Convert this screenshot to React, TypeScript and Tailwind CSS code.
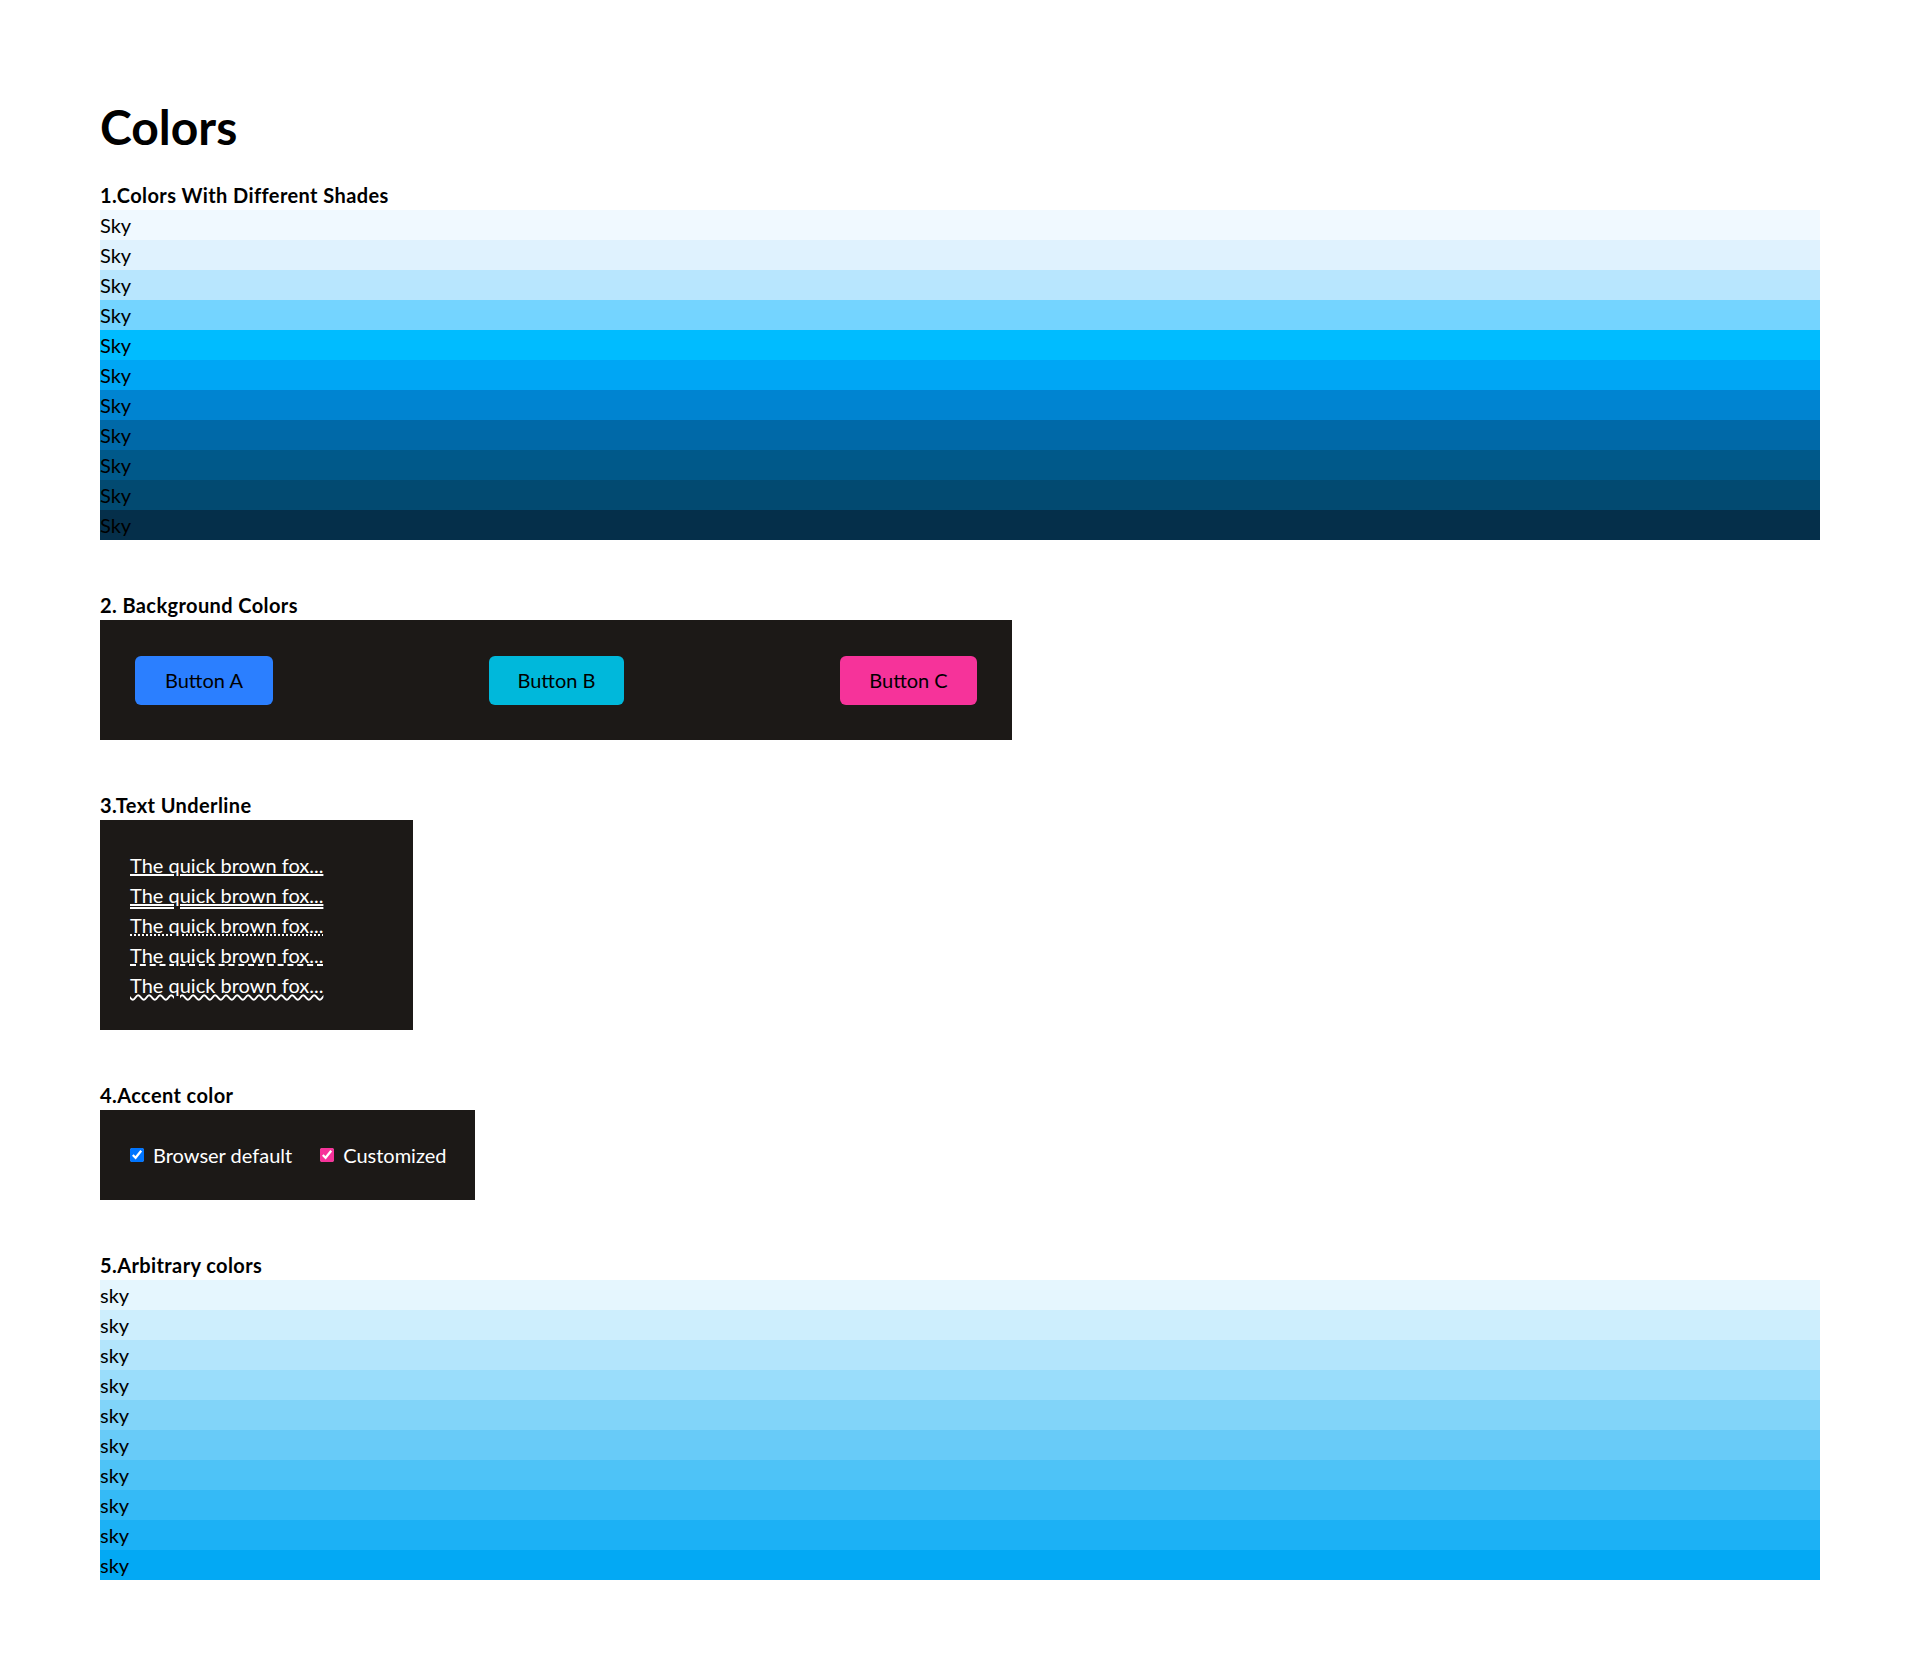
import React from 'react';

const skyShades = [
  'bg-sky-50',
  'bg-sky-100',
  'bg-sky-200',
  'bg-sky-300',
  'bg-sky-400',
  'bg-sky-500',
  'bg-sky-600',
  'bg-sky-700',
  'bg-sky-800',
  'bg-sky-900',
  'bg-sky-950',
];

const arbitraryShades = [
  'bg-[#03a9f4]/10',
  'bg-[#03a9f4]/20',
  'bg-[#03a9f4]/30',
  'bg-[#03a9f4]/40',
  'bg-[#03a9f4]/50',
  'bg-[#03a9f4]/60',
  'bg-[#03a9f4]/70',
  'bg-[#03a9f4]/80',
  'bg-[#03a9f4]/90',
  'bg-[#03a9f4]',
];

const underlines = [
  'underline decoration-solid',
  'underline decoration-double',
  'underline decoration-dotted',
  'underline decoration-dashed',
  'underline decoration-wavy',
];

const SectionTitle: React.FC<{ children: React.ReactNode }> = ({ children }) => (
  <h2 className="font-bold leading-[30px] tracking-[0.4px]">{children}</h2>
);

const App: React.FC = () => {
  return (
    <div className="min-h-screen bg-white px-[100px] py-[100px] text-[20px] leading-[30px] text-black font-['Lato',sans-serif]">
      <h1 className="mb-[29px] pt-[3px] text-5xl leading-none font-bold">Colors</h1>

      {/* 1. shades */}
      <section>
        <SectionTitle>1.Colors With Different Shades</SectionTitle>
        <div className="flex flex-col">
          {skyShades.map((shade, i) => (
            <div key={i} className={`h-[30px] ${shade}`}>
              Sky
            </div>
          ))}
        </div>
      </section>

      {/* 2. background colors */}
      <section className="mt-[50px]">
        <SectionTitle>2. Background Colors</SectionTitle>
        <div className="flex h-[120px] w-[912px] items-center justify-between bg-stone-900 px-[35px]">
          <button className="h-[49px] w-[138px] rounded-md bg-blue-500 text-black">Button A</button>
          <button className="h-[49px] w-[135px] rounded-md bg-cyan-500 text-black">Button B</button>
          <button className="h-[49px] w-[137px] rounded-md bg-pink-500 text-black">Button C</button>
        </div>
      </section>

      {/* 3. underline */}
      <section className="mt-[50px]">
        <SectionTitle>3.Text Underline</SectionTitle>
        <div className="flex w-[313px] flex-col bg-stone-900 p-[30px] text-white">
          {underlines.map((style, i) => (
            <p key={i} className={style}>
              The quick brown fox...
            </p>
          ))}
        </div>
      </section>

      {/* 4. accent */}
      <section className="mt-[50px]">
        <SectionTitle>4.Accent color</SectionTitle>
        <div className="flex h-[90px] w-[375px] items-center gap-[28px] bg-stone-900 px-[30px] text-white">
          <label className="flex shrink-0 items-center gap-[9px] whitespace-nowrap">
            <input type="checkbox" defaultChecked className="h-[14px] w-[14px]" />
            Browser default
          </label>
          <label className="flex shrink-0 items-center gap-[9px] whitespace-nowrap">
            <input type="checkbox" defaultChecked className="h-[14px] w-[14px] accent-pink-500" />
            Customized
          </label>
        </div>
      </section>

      {/* 5. arbitrary */}
      <section className="mt-[50px]">
        <SectionTitle>5.Arbitrary colors</SectionTitle>
        <div className="flex flex-col">
          {arbitraryShades.map((shade, i) => (
            <div key={i} className={`h-[30px] ${shade}`}>
              sky
            </div>
          ))}
        </div>
      </section>
    </div>
  );
};

export default App;
